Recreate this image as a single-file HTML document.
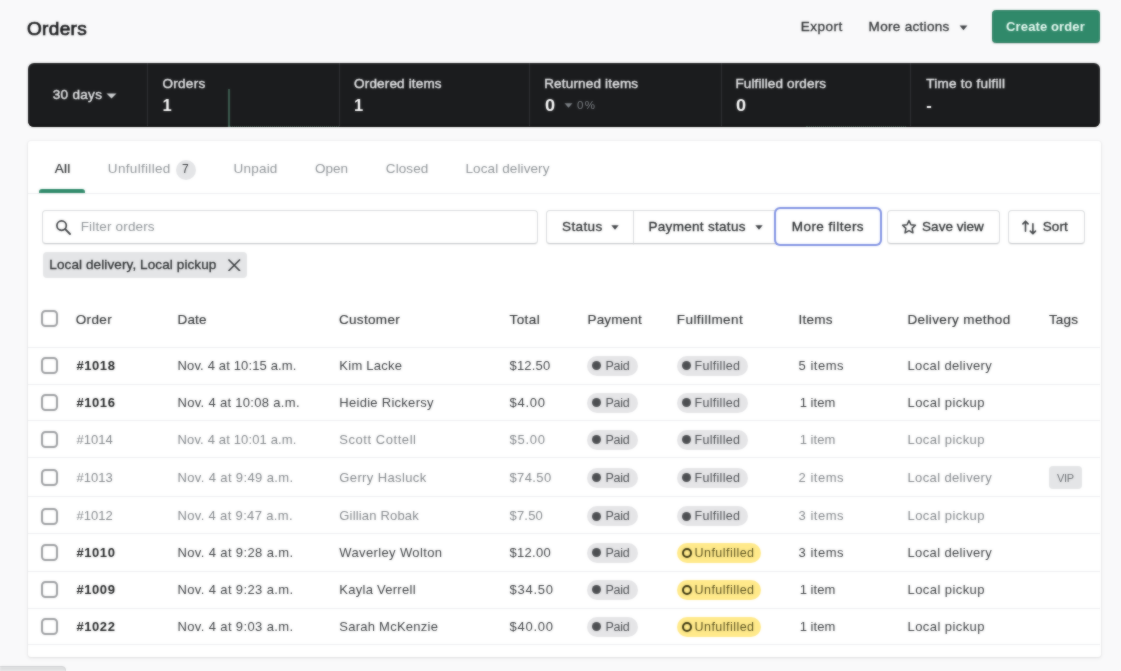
<!DOCTYPE html>
<html lang="en"><head><meta charset="utf-8"><title>Orders</title>
<style>
*{box-sizing:border-box;margin:0;padding:0}
html,body{width:1121px;height:671px;overflow:hidden;background:#f9f9fa;font-family:"Liberation Sans",sans-serif;color:#202223;font-size:13px}
body{position:relative;will-change:transform;filter:url(#soft)}
.a{position:absolute}
h1{font-weight:normal}
.t{position:absolute;white-space:nowrap;font-size:13px;line-height:16px;color:#36393c}
.ttl{font-size:19px;line-height:24px;color:#18191b;-webkit-text-stroke:0.7px #18191b}
.hd{font-size:13.5px;color:#303335;-webkit-text-stroke:0.3px #303335}
.cr{color:#e9fbf3;font-weight:bold}
.bl{font-size:13.5px;color:#e6e7e9;-webkit-text-stroke:0.4px #e6e7e9}
.bv{color:#fff;font-weight:bold;font-size:16.5px}
.sx{transform:scaleX(1.1);transform-origin:0 50%}
.bp{color:#7d8186;font-size:11.5px}
.tb{font-size:13.5px;color:#8f9498}
.tb.on{color:#303335;-webkit-text-stroke:0.2px #303335}
.tn{color:#3a3d40;font-size:12px}
.ph{font-size:13.5px;color:#8f9498}
.bt{font-size:13.5px;color:#2b2e30;-webkit-text-stroke:0.3px #2b2e30}
.th{font-size:13.5px;color:#303335;-webkit-text-stroke:0.15px #303335}
.td{color:#3e4144}
.dim{color:#83878b}
.ob{color:#202223;font-weight:bold}
.od{color:#83878b}
.bg{color:#4c4f53;font-size:12.5px}
.bgy{color:#5b5320;font-size:12.5px}
.tg{color:#6d7175;font-size:11px}
.ln{position:absolute;left:28px;width:1072px;height:1px;background:#edeef0}
.cb{position:absolute;left:41.3px;width:17px;height:17px;border:2px solid #9b9da0;border-radius:4.5px;background:#fff}
.btn{position:absolute;top:209.6px;height:34px;border:1px solid #d9dbdd;border-bottom-color:#c8cacd;background:#fff;box-shadow:0 1px 0 rgba(0,0,0,.05)}
.pill{position:absolute;height:20px;border-radius:10px;background:#e5e5e7}
.pill.y{background:#ffe98a}
.dot{position:absolute;width:9px;height:9px;border-radius:50%;background:#4d4f52}
.ring{position:absolute;width:10px;height:10px;border-radius:50%;border:2.2px solid #3a3610}
</style></head><body>
<svg width="0" height="0" style="position:absolute" aria-hidden="true"><defs><filter id="soft" x="0" y="0" width="100%" height="100%" color-interpolation-filters="sRGB"><feGaussianBlur stdDeviation="0.8" result="b"/><feComposite in="SourceGraphic" in2="b" operator="arithmetic" k1="0" k2="0.45" k3="0.55" k4="0"/></filter></defs></svg>
<header class="page-header">
<div class="a" style="left:992px;top:9.7px;width:108px;height:33px;background:#30896a;border:1px solid #2a7b5e;border-radius:3.5px;box-shadow:0 1px 0 rgba(0,0,0,.12)"></div>
<svg class="a" style="left:959px;top:24.5px" width="9" height="6" viewBox="0 0 9 6"><path d="M0.6 0.6h7.8L4.5 5.2z" fill="#3f4245"/></svg>
<h1 id="t0" class="t ttl" style="left:27.0px;top:16.7px;letter-spacing:0.32px;">Orders</h1>
<div id="t1" class="t hd" style="left:800.8px;top:18.7px;letter-spacing:0.49px;">Export</div>
<div id="t2" class="t hd" style="left:868.6px;top:18.7px;letter-spacing:0.31px;">More actions</div>
<div id="t3" class="t cr" style="left:1006.1px;top:18.6px;letter-spacing:0.12px;">Create order</div>
</header>
<section class="stats">
<div class="a" style="left:27.5px;top:62.5px;width:1072px;height:64px;background:#1b1c1e;border-radius:6px;box-shadow:inset 0 -1.5px 0 #050505"></div>
<div class="a" style="left:147.0px;top:63px;width:1px;height:63px;background:#2e2f32"></div>
<div class="a" style="left:339.0px;top:63px;width:1px;height:63px;background:#2e2f32"></div>
<div class="a" style="left:529.0px;top:63px;width:1px;height:63px;background:#2e2f32"></div>
<div class="a" style="left:721.0px;top:63px;width:1px;height:63px;background:#2e2f32"></div>
<div class="a" style="left:910.0px;top:63px;width:1px;height:63px;background:#2e2f32"></div>
<svg class="a" style="left:106px;top:92.5px" width="11" height="6" viewBox="0 0 11 6"><path d="M0.5 0.5h10L5.5 5.5z" fill="#cfd1d3"/></svg>
<svg class="a" style="left:563.7px;top:102.5px" width="9" height="5" viewBox="0 0 9 5"><path d="M0.5 0.3h8L4.5 4.7z" fill="#7d8186"/></svg>
<div class="a" style="left:228px;top:89px;width:2.4px;height:37.5px;background:#3c5a4e"></div>
<div class="a" style="left:230px;top:126.2px;width:109px;height:0;border-top:1.4px dotted #2b4539;opacity:.9"></div>
<div class="a" style="left:806px;top:126.2px;width:100px;height:0;border-top:1.4px dotted #2b4539;opacity:.9"></div>
<div id="t4" class="t bl" style="left:52.7px;top:87.2px;letter-spacing:0.32px;">30 days</div>
<div id="t5" class="t bl" style="left:162.5px;top:76.1px;letter-spacing:0.29px;">Orders</div>
<div id="t6" class="t bl" style="left:354.1px;top:76.1px;letter-spacing:0.16px;">Ordered items</div>
<div id="t7" class="t bl" style="left:544.2px;top:76.1px;letter-spacing:0.18px;">Returned items</div>
<div id="t8" class="t bl" style="left:735.4px;top:76.1px;letter-spacing:0.14px;">Fulfilled orders</div>
<div id="t9" class="t bl" style="left:926.2px;top:76.1px;letter-spacing:0.25px;">Time to fulfill</div>
<div id="t10" class="t bv" style="left:162.5px;top:97.2px;">1</div>
<div id="t11" class="t bv" style="left:354.1px;top:97.2px;">1</div>
<div id="t12" class="t bv sx" style="left:544.7px;top:97.2px;">0</div>
<div id="t13" class="t bv sx" style="left:735.9px;top:97.2px;">0</div>
<div id="t14" class="t bv" style="left:926.2px;top:97.2px;">-</div>
<div id="t15" class="t bp" style="left:577.1px;top:97.1px;letter-spacing:1.20px;">0%</div>
</section>
<main class="orders-card">
<div class="a" style="left:27.5px;top:140.6px;width:1073px;height:516.5px;background:#fff;border-radius:3px;box-shadow:0 0 0 1px rgba(63,63,68,.03),0 1px 3px rgba(63,63,68,.12)"></div>
<nav class="tabs">
<div class="ln" style="top:193.3px"></div>
<div class="a" style="left:38.7px;top:189.3px;width:46.3px;height:3.5px;background:#2f8a6a;border-radius:3px 3px 0 0"></div>
<div class="a" style="left:176px;top:159.5px;width:20px;height:20px;border-radius:10px;background:#e4e5e7"></div>
<div id="t16" class="t tb on" style="left:54.8px;top:160.9px;letter-spacing:0.24px;">All</div>
<div id="t17" class="t tb" style="left:107.8px;top:160.9px;letter-spacing:0.33px;">Unfulfilled</div>
<div id="t18" class="t tn" style="left:182.0px;top:161.4px;">7</div>
<div id="t19" class="t tb" style="left:233.5px;top:160.9px;letter-spacing:0.22px;">Unpaid</div>
<div id="t20" class="t tb" style="left:314.9px;top:160.9px;letter-spacing:0.02px;">Open</div>
<div id="t21" class="t tb" style="left:385.8px;top:160.9px;letter-spacing:0.09px;">Closed</div>
<div id="t22" class="t tb" style="left:465.5px;top:160.9px;letter-spacing:0.11px;">Local delivery</div>
</nav>
<div class="filters">
<div class="btn" style="left:42px;width:496px;border-radius:4px"></div>
<svg class="a" style="left:54.7px;top:218.7px" width="17" height="17" viewBox="0 0 17 17"><circle cx="6.6" cy="6.6" r="4.7" fill="none" stroke="#3f4245" stroke-width="1.7"/><path d="M10.2 10.2L15 15" stroke="#3f4245" stroke-width="1.9" stroke-linecap="round"/></svg>
<div class="btn" style="left:546px;width:88px;border-radius:4px 0 0 4px"></div>
<div class="btn" style="left:633px;width:143px;border-radius:0"></div>
<div class="btn" style="left:775.5px;top:208.8px;height:35px;width:104.5px;border-radius:4px;border-color:#fff;box-shadow:0 0 0 2px #7f91e2"></div>
<div class="btn" style="left:887px;width:113px;border-radius:4px"></div>
<div class="btn" style="left:1008px;width:77px;border-radius:4px"></div>
<svg class="a" style="left:611.3px;top:224.8px" width="8" height="5" viewBox="0 0 8 5"><path d="M0.3 0.3h7.4L4 4.7z" fill="#3f4245"/></svg>
<svg class="a" style="left:755.0px;top:224.8px" width="8" height="5" viewBox="0 0 8 5"><path d="M0.3 0.3h7.4L4 4.7z" fill="#3f4245"/></svg>
<svg class="a" style="left:901px;top:219.3px" width="16" height="16" viewBox="0 0 16 16"><path d="M8 1.6l1.95 4.1 4.45.6-3.25 3.1.8 4.45L8 11.7l-3.95 2.15.8-4.45L1.6 6.3l4.45-.6z" fill="none" stroke="#3f4245" stroke-width="1.5" stroke-linejoin="round"/></svg>
<svg class="a" style="left:1021px;top:219px" width="17" height="17" viewBox="0 0 17 17"><path d="M4.5 12.3V2.2M1.9 4.9l2.6-2.7 2.6 2.7M11.9 4.7v10.1M9.3 12.1l2.6 2.7 2.6-2.7" fill="none" stroke="#3f4245" stroke-width="1.6" stroke-linecap="round" stroke-linejoin="round"/></svg>
<div class="a" style="left:42.5px;top:251.5px;width:204px;height:26px;background:#e4e5e7;border-radius:4px"></div>
<svg class="a" style="left:228px;top:258.5px" width="12.5" height="12.5" viewBox="0 0 12.5 12.5"><path d="M1 1l10.5 10.5M11.5 1L1 11.5" stroke="#3f4245" stroke-width="1.7" stroke-linecap="round"/></svg>
<div id="t23" class="t ph" style="left:80.7px;top:219.2px;letter-spacing:0.16px;">Filter orders</div>
<div id="t24" class="t bt" style="left:562.1px;top:219.2px;letter-spacing:0.36px;">Status</div>
<div id="t25" class="t bt" style="left:648.5px;top:219.2px;letter-spacing:0.30px;">Payment status</div>
<div id="t26" class="t bt" style="left:791.7px;top:219.2px;letter-spacing:0.47px;">More filters</div>
<div id="t27" class="t bt" style="left:922.1px;top:219.2px;letter-spacing:0.01px;">Save view</div>
<div id="t28" class="t bt" style="left:1042.7px;top:219.2px;letter-spacing:0.14px;">Sort</div>
<div id="t29" class="t bt" style="left:49.3px;top:256.7px;letter-spacing:0.11px;">Local delivery, Local pickup</div>
</div>
<div class="orders-table">
<div class="thead">
<div class="ln" style="top:347.0px"></div>
<div class="cb" style="top:310px"></div>
<div id="t30" class="t th" style="left:75.7px;top:312.3px;letter-spacing:0.37px;">Order</div>
<div id="t31" class="t th" style="left:177.5px;top:312.3px;letter-spacing:0.16px;">Date</div>
<div id="t32" class="t th" style="left:338.9px;top:312.3px;letter-spacing:0.34px;">Customer</div>
<div id="t33" class="t th" style="left:509.5px;top:312.3px;letter-spacing:0.42px;">Total</div>
<div id="t34" class="t th" style="left:587.5px;top:312.3px;letter-spacing:0.15px;">Payment</div>
<div id="t35" class="t th" style="left:676.8px;top:312.3px;letter-spacing:0.44px;">Fulfillment</div>
<div id="t36" class="t th" style="left:798.5px;top:312.3px;letter-spacing:0.25px;">Items</div>
<div id="t37" class="t th" style="left:907.5px;top:312.3px;letter-spacing:0.37px;">Delivery method</div>
<div id="t38" class="t th" style="left:1048.9px;top:312.3px;letter-spacing:0.16px;">Tags</div>
</div>
<div class="tr">
<div class="ln" style="top:383.6px"></div>
<div class="cb" style="top:357.0px"></div>
<div class="pill" style="left:587.4px;top:355.5px;width:50.2px"></div>
<div class="dot" style="left:592.3px;top:361.0px"></div>
<div class="pill" style="left:677px;top:355.5px;width:71px"></div>
<div class="dot" style="left:681.9px;top:361.0px"></div>
<div id="t39" class="t ob" style="left:76.5px;top:357.6px;letter-spacing:0.56px;">#1018</div>
<div id="t40" class="t td" style="left:177.5px;top:357.6px;letter-spacing:0.15px;">Nov. 4 at 10:15 a.m.</div>
<div id="t41" class="t td" style="left:339.3px;top:357.6px;letter-spacing:0.26px;">Kim Lacke</div>
<div id="t42" class="t td" style="left:509.5px;top:357.6px;letter-spacing:0.19px;">$12.50</div>
<div id="t43" class="t bg" style="left:605.5px;top:357.6px;letter-spacing:-0.24px;">Paid</div>
<div id="t44" class="t bg" style="left:694.5px;top:357.6px;letter-spacing:0.29px;">Fulfilled</div>
<div id="t45" class="t td" style="left:798.5px;top:357.6px;letter-spacing:0.52px;">5 items</div>
<div id="t46" class="t td" style="left:907.5px;top:357.6px;letter-spacing:0.37px;">Local delivery</div>
</div>
<div class="tr">
<div class="ln" style="top:419.8px"></div>
<div class="cb" style="top:394.0px"></div>
<div class="pill" style="left:587.4px;top:392.5px;width:50.2px"></div>
<div class="dot" style="left:592.3px;top:398.0px"></div>
<div class="pill" style="left:677px;top:392.5px;width:71px"></div>
<div class="dot" style="left:681.9px;top:398.0px"></div>
<div id="t47" class="t ob" style="left:76.5px;top:394.6px;letter-spacing:0.56px;">#1016</div>
<div id="t48" class="t td" style="left:177.5px;top:394.6px;letter-spacing:0.31px;">Nov. 4 at 10:08 a.m.</div>
<div id="t49" class="t td" style="left:339.3px;top:394.6px;letter-spacing:0.28px;">Heidie Rickersy</div>
<div id="t50" class="t td" style="left:509.5px;top:394.6px;letter-spacing:0.74px;">$4.00</div>
<div id="t51" class="t bg" style="left:605.5px;top:394.6px;letter-spacing:-0.24px;">Paid</div>
<div id="t52" class="t bg" style="left:694.5px;top:394.6px;letter-spacing:0.29px;">Fulfilled</div>
<div id="t53" class="t td" style="left:799.7px;top:394.6px;letter-spacing:0.04px;">1 item</div>
<div id="t54" class="t td" style="left:907.5px;top:394.6px;letter-spacing:0.43px;">Local pickup</div>
</div>
<div class="tr">
<div class="ln" style="top:456.8px"></div>
<div class="cb" style="top:431.1px"></div>
<div class="pill" style="left:587.4px;top:429.6px;width:50.2px"></div>
<div class="dot" style="left:592.3px;top:435.1px"></div>
<div class="pill" style="left:677px;top:429.6px;width:71px"></div>
<div class="dot" style="left:681.9px;top:435.1px"></div>
<div id="t55" class="t od" style="left:76.5px;top:431.7px;letter-spacing:0.04px;">#1014</div>
<div id="t56" class="t td dim" style="left:177.5px;top:431.7px;letter-spacing:0.15px;">Nov. 4 at 10:01 a.m.</div>
<div id="t57" class="t td dim" style="left:339.3px;top:431.7px;letter-spacing:0.55px;">Scott Cottell</div>
<div id="t58" class="t td dim" style="left:509.5px;top:431.7px;letter-spacing:0.74px;">$5.00</div>
<div id="t59" class="t bg" style="left:605.5px;top:431.7px;letter-spacing:-0.24px;">Paid</div>
<div id="t60" class="t bg" style="left:694.5px;top:431.7px;letter-spacing:0.29px;">Fulfilled</div>
<div id="t61" class="t td dim" style="left:799.7px;top:431.7px;letter-spacing:0.04px;">1 item</div>
<div id="t62" class="t td dim" style="left:907.5px;top:431.7px;letter-spacing:0.43px;">Local pickup</div>
</div>
<div class="tr">
<div class="ln" style="top:495.9px"></div>
<div class="cb" style="top:469.1px"></div>
<div class="pill" style="left:587.4px;top:467.6px;width:50.2px"></div>
<div class="dot" style="left:592.3px;top:473.1px"></div>
<div class="pill" style="left:677px;top:467.6px;width:71px"></div>
<div class="dot" style="left:681.9px;top:473.1px"></div>
<div class="a" style="left:1048.5px;top:466.1px;width:33px;height:23px;background:#e4e5e7;border-radius:4px"></div>
<div id="t63" class="t od" style="left:76.5px;top:469.7px;letter-spacing:0.04px;">#1013</div>
<div id="t64" class="t td dim" style="left:177.5px;top:469.7px;letter-spacing:0.37px;">Nov. 4 at 9:49 a.m.</div>
<div id="t65" class="t td dim" style="left:339.3px;top:469.7px;letter-spacing:0.38px;">Gerry Hasluck</div>
<div id="t66" class="t td dim" style="left:509.5px;top:469.7px;letter-spacing:0.39px;">$74.50</div>
<div id="t67" class="t bg" style="left:605.5px;top:469.7px;letter-spacing:-0.24px;">Paid</div>
<div id="t68" class="t bg" style="left:694.5px;top:469.7px;letter-spacing:0.29px;">Fulfilled</div>
<div id="t69" class="t td dim" style="left:798.5px;top:469.7px;letter-spacing:0.52px;">2 items</div>
<div id="t70" class="t td dim" style="left:907.5px;top:469.7px;letter-spacing:0.37px;">Local delivery</div>
<div id="t71" class="t tg" style="left:1057.0px;top:469.7px;letter-spacing:-0.37px;">VIP</div>
</div>
<div class="tr">
<div class="ln" style="top:533.3px"></div>
<div class="cb" style="top:507.5px"></div>
<div class="pill" style="left:587.4px;top:506.0px;width:50.2px"></div>
<div class="dot" style="left:592.3px;top:511.5px"></div>
<div class="pill" style="left:677px;top:506.0px;width:71px"></div>
<div class="dot" style="left:681.9px;top:511.5px"></div>
<div id="t72" class="t od" style="left:76.5px;top:508.1px;letter-spacing:0.04px;">#1012</div>
<div id="t73" class="t td dim" style="left:177.5px;top:508.1px;letter-spacing:0.34px;">Nov. 4 at 9:47 a.m.</div>
<div id="t74" class="t td dim" style="left:339.3px;top:508.1px;letter-spacing:0.18px;">Gillian Robak</div>
<div id="t75" class="t td dim" style="left:509.5px;top:508.1px;letter-spacing:0.19px;">$7.50</div>
<div id="t76" class="t bg" style="left:605.5px;top:508.1px;letter-spacing:-0.24px;">Paid</div>
<div id="t77" class="t bg" style="left:694.5px;top:508.1px;letter-spacing:0.29px;">Fulfilled</div>
<div id="t78" class="t td dim" style="left:798.5px;top:508.1px;letter-spacing:0.52px;">3 items</div>
<div id="t79" class="t td dim" style="left:907.5px;top:508.1px;letter-spacing:0.43px;">Local pickup</div>
</div>
<div class="tr">
<div class="ln" style="top:570.6px"></div>
<div class="cb" style="top:544.1px"></div>
<div class="pill" style="left:587.4px;top:542.6px;width:50.2px"></div>
<div class="dot" style="left:592.3px;top:548.1px"></div>
<div class="pill y" style="left:677.3px;top:542.6px;width:84px"></div>
<div class="ring" style="left:681.6px;top:547.6px"></div>
<div id="t80" class="t ob" style="left:76.5px;top:544.7px;letter-spacing:0.56px;">#1010</div>
<div id="t81" class="t td" style="left:177.5px;top:544.7px;letter-spacing:0.37px;">Nov. 4 at 9:28 a.m.</div>
<div id="t82" class="t td" style="left:339.3px;top:544.7px;letter-spacing:0.37px;">Waverley Wolton</div>
<div id="t83" class="t td" style="left:509.5px;top:544.7px;letter-spacing:0.31px;">$12.00</div>
<div id="t84" class="t bg" style="left:605.5px;top:544.7px;letter-spacing:-0.24px;">Paid</div>
<div id="t85" class="t bgy" style="left:694.5px;top:544.7px;letter-spacing:0.46px;">Unfulfilled</div>
<div id="t86" class="t td" style="left:798.5px;top:544.7px;letter-spacing:0.52px;">3 items</div>
<div id="t87" class="t td" style="left:907.5px;top:544.7px;letter-spacing:0.37px;">Local delivery</div>
</div>
<div class="tr">
<div class="ln" style="top:608.0px"></div>
<div class="cb" style="top:581.1px"></div>
<div class="pill" style="left:587.4px;top:579.6px;width:50.2px"></div>
<div class="dot" style="left:592.3px;top:585.1px"></div>
<div class="pill y" style="left:677.3px;top:579.6px;width:84px"></div>
<div class="ring" style="left:681.6px;top:584.6px"></div>
<div id="t88" class="t ob" style="left:76.5px;top:581.7px;letter-spacing:0.56px;">#1009</div>
<div id="t89" class="t td" style="left:177.5px;top:581.7px;letter-spacing:0.37px;">Nov. 4 at 9:23 a.m.</div>
<div id="t90" class="t td" style="left:339.3px;top:581.7px;letter-spacing:0.27px;">Kayla Verrell</div>
<div id="t91" class="t td" style="left:509.5px;top:581.7px;letter-spacing:0.75px;">$34.50</div>
<div id="t92" class="t bg" style="left:605.5px;top:581.7px;letter-spacing:-0.24px;">Paid</div>
<div id="t93" class="t bgy" style="left:694.5px;top:581.7px;letter-spacing:0.46px;">Unfulfilled</div>
<div id="t94" class="t td" style="left:799.7px;top:581.7px;letter-spacing:0.04px;">1 item</div>
<div id="t95" class="t td" style="left:907.5px;top:581.7px;letter-spacing:0.43px;">Local pickup</div>
</div>
<div class="tr">
<div class="ln" style="top:644.3px"></div>
<div class="cb" style="top:618.3px"></div>
<div class="pill" style="left:587.4px;top:616.8px;width:50.2px"></div>
<div class="dot" style="left:592.3px;top:622.3px"></div>
<div class="pill y" style="left:677.3px;top:616.8px;width:84px"></div>
<div class="ring" style="left:681.6px;top:621.8px"></div>
<div id="t96" class="t ob" style="left:76.5px;top:618.9px;letter-spacing:0.56px;">#1022</div>
<div id="t97" class="t td" style="left:177.5px;top:618.9px;letter-spacing:0.37px;">Nov. 4 at 9:03 a.m.</div>
<div id="t98" class="t td" style="left:339.3px;top:618.9px;letter-spacing:0.25px;">Sarah McKenzie</div>
<div id="t99" class="t td" style="left:509.5px;top:618.9px;letter-spacing:0.75px;">$40.00</div>
<div id="t100" class="t bg" style="left:605.5px;top:618.9px;letter-spacing:-0.24px;">Paid</div>
<div id="t101" class="t bgy" style="left:694.5px;top:618.9px;letter-spacing:0.46px;">Unfulfilled</div>
<div id="t102" class="t td" style="left:799.7px;top:618.9px;letter-spacing:0.04px;">1 item</div>
<div id="t103" class="t td" style="left:907.5px;top:618.9px;letter-spacing:0.43px;">Local pickup</div>
</div>
</div>
</main>
<footer class="dock">
<div class="a" style="left:-1px;top:666px;width:66.5px;height:8px;background:#dfe0e1;border:1px solid #cfd0d2;border-radius:0 4px 0 0"></div>
</footer>
</body></html>
